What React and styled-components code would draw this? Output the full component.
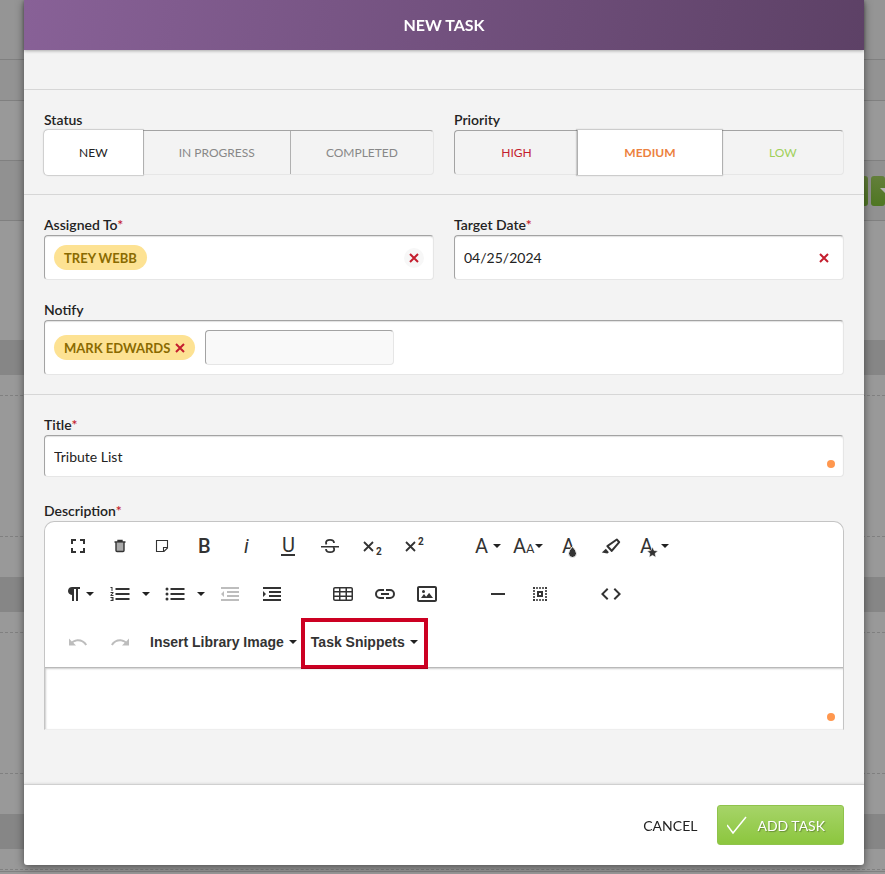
import React, { useState } from "react";
import styled, { createGlobalStyle, css } from "styled-components";

const GlobalStyle = createGlobalStyle`
  * {
    box-sizing: border-box;
  }

  body {
    margin: 0;
    overflow: hidden;
    background: #999999;
    color: #222222;
    font-family: Lato, "Liberation Sans", sans-serif;
    font-size: 14px;
  }

  button,
  input,
  textarea {
    font-family: inherit;
  }
`;

const LETTER = "Roboto, sans-serif";

const Icon = ({ children, faded }) => (
  <IconSvg viewBox="0 0 24 24" $faded={faded} aria-hidden="true">
    {children}
  </IconSvg>
);

const Letter = ({ x, y = 19, size = 20, weight = 400, children, ...rest }) => (
  <text x={x} y={y} fontFamily={LETTER} fontSize={size} fontWeight={weight} {...rest}>
    {children}
  </text>
);

const Cross = () => (
  <CrossSvg viewBox="0 0 10 10" aria-hidden="true">
    <path d="M1 1l8 8M9 1l-8 8" fill="none" stroke="#c41e2e" strokeWidth="2" />
  </CrossSvg>
);

const icons = {
  fullscreen: (
    <path d="M7 14H5v5h5v-2H7zM5 10h2V7h3V5H5zm12 7h-3v2h5v-5h-2zM14 5v2h3v3h2V5z" />
  ),
  trash: (
    <>
      <path d="M8 9h8v8.500h-8z" fill="#aaaaaa" />
      <path
        d="M8 8.500v8q0 1 1 1h6q1 0 1-1v-8M6.500 8h11M10 7.500V6.500h4v1"
        fill="none"
        stroke="#333333"
        strokeWidth="1.400"
      />
    </>
  ),
  note: (
    <path
      d="M6.500 6.500h11v7.500l-3.500 3.500h-7.500zM17.500 13.500h-4v4"
      fill="none"
      stroke="#333333"
      strokeWidth="1.100"
    />
  ),
  bold: (
    <Letter x="6" weight="500">
      B
    </Letter>
  ),
  italic: (
    <Letter x="10" fontStyle="italic">
      i
    </Letter>
  ),
  underline: (
    <>
      <Letter x="6" y="18">
        U
      </Letter>
      <path d="M5 20h14v2H5z" />
    </>
  ),
  strike: (
    <>
      <path
        d="M16 9c0-2-1.500-3.200-4-3.200S8 7 8 8.700q0 1 .6 1.700M8 15c0 2 1.700 3.200 4.200 3.200s4-1.100 4-2.900q0-1.300-1-2.200"
        fill="none"
        stroke="#333333"
        strokeWidth="1.800"
      />
      <path d="M3 12h18v1.500H3z" />
    </>
  ),
  subscript: (
    <>
      <path d="M4 8l9 9M13 8l-9 9" fill="none" stroke="#333333" strokeWidth="1.800" />
      <Letter x="16" y="21" size="10" weight="700">
        2
      </Letter>
    </>
  ),
  superscript: (
    <>
      <path d="M4 8l9 9M13 8l-9 9" fill="none" stroke="#333333" strokeWidth="1.800" />
      <Letter x="16" y="11" size="10" weight="700">
        2
      </Letter>
    </>
  ),
  fontFamily: <Letter x="6">A</Letter>,
  fontSize: (
    <>
      <Letter x="2">A</Letter>
      <Letter x="15" size="13">
        A
      </Letter>
    </>
  ),
  textColor: (
    <>
      <Letter x="5">A</Letter>
      <path
        d="M15.500 12.500q-4 4-4 7a4 4 0 0 0 8 0q0-3-4-7z"
        stroke="#ffffff"
        strokeWidth="1"
      />
    </>
  ),
  background: (
    <path d="M9.918 12.241l7.748-5.390 1.179 1.296-6.094 7.207-2.833-3.113M7.587 12.652l4.536 4.983a.934.934 0 0 0 1.395-.091l7.451-8.813a.908.908 0 0 0 .022-1.198l-2.513-2.761a.908.908 0 0 0-1.195-.092l-9.474 6.591a.934.934 0 0 0-.222 1.381zM2.794 18.528l5.617.972 1.479-1.346-3.029-3.328z" />
  ),
  inlineStyle: (
    <>
      <Letter x="3">A</Letter>
      <path
        d="M15.500 13l1.500 3.500 3.800.4-2.800 2.600.8 3.800-3.300-2-3.300 2 .8-3.800-2.800-2.600 3.800-.4z"
        stroke="#ffffff"
        strokeWidth=".5"
      />
    </>
  ),
  paragraph: <path d="M10.150 5a4.110 4.110 0 0 0-4.070 3.180A4 4 0 0 0 10 13v6h2V7h2v12h2V7h2V5z" />,
  orderedList: (
    <path d="M2.500 16h2v.5h-1v1h1v.5h-2v1h3v-4h-3zm1-7h1V5h-2v1h1zm-1 2h1.800l-1.800 2.100v.9h3v-1H3.700l1.800-2.100V10h-3zm5-5v2h14V6zm0 12h14v-2h-14zm0-5h14v-2h-14z" />
  ),
  unorderedList: (
    <>
      <circle cx="4" cy="7" r="1.500" />
      <circle cx="4" cy="12" r="1.500" />
      <circle cx="4" cy="17" r="1.500" />
      <path d="M7.500 6v2h14V6zm0 12h14v-2h-14zm0-5h14v-2h-14z" />
    </>
  ),
  outdent: <path d="M3 12l3 3V9zm0 7h18v-2H3zM3 7h18V5H3zm6 4h12V9H9zm0 4h12v-2H9z" />,
  indent: <path d="M3 9v6l3-3zm0 10h18v-2H3zM3 7h18V5H3zm6 4h12V9H9zm0 4h12v-2H9z" />,
  table: (
    <path d="M20 5H4c-1.100 0-2 .9-2 2v10c0 1.100.9 2 2 2h16c1.100 0 2-.9 2-2V7c0-1.100-.9-2-2-2zM9.500 13.500v-3h5v3h-5zm5 1.500v2.500h-5V15h5zm-5-6V6.500h5V9h-5zm-6-2c0-.3.2-.5.5-.5h4V9H3.500V7zm0 3.500H8v3H3.500v-3zm0 6.500v-2H8v2.500H4c-.3 0-.5-.2-.5-.5zm17 0c0 .3-.2.5-.5.5h-4V15h4.500v2zm0-3.500H16v-3h4.500v3zM16 9V6.500h4c.3 0 .5.2.5.5v2H16z" />
  ),
  link: (
    <path d="M11 17H7A5 5 0 0 1 7 7h4v2H7a3 3 0 0 0 0 6h4zm6-10h-4v2h4a3 3 0 0 1 0 6h-4v2h4a5 5 0 0 0 0-10zm-1 4H8v2h8z" />
  ),
  image: (
    <path d="M14.200 11l3.800 5H6l3-3.900 2.100 2.700L14 11h.2zM8.500 11a1.500 1.500 0 1 0 0-3 1.500 1.500 0 0 0 0 3zM22 6v12c0 1.100-.9 2-2 2H4c-1.100 0-2-.9-2-2V6c0-1.100.9-2 2-2h16c1.100 0 2 .9 2 2zm-2 0H4v12h16V6z" />
  ),
  line: <path d="M5 11h14v2H5z" />,
  selectAll: (
    <>
      <path
        d="M5 6h14M5 18h14M6 5v14M18 5v14"
        fill="none"
        stroke="#333333"
        strokeWidth="1.600"
        strokeDasharray="2 1"
      />
      <path d="M10 10h4v4h-4z" fill="none" stroke="#333333" strokeWidth="2" />
    </>
  ),
  code: (
    <path d="M9.400 16.600L4.800 12l4.600-4.600L8 6l-6 6 6 6zm5.200 0l4.600-4.600-4.600-4.600L16 6l6 6-6 6z" />
  ),
  undo: (
    <path d="M10.400 9.400c-1.700.3-3.200.9-4.600 2L3 8.500v7h7l-2.700-2.700c3.700-2.600 8.800-1.800 11.500 1.900.2.300.4.500.5.800l1.800-.9C18.900 10.800 14.700 8.700 10.400 9.400z" />
  ),
  redo: (
    <path d="M13.600 9.400c1.700.3 3.200.9 4.600 2L21 8.500v7h-7l2.700-2.700C13 10.200 7.900 11 5.300 14.700c-.2.300-.4.500-.5.800L3 14.600C5.100 10.800 9.300 8.700 13.600 9.400z" />
  ),
};

// kind: "menu" has its caret inside, "split" has it as a second button
const toolbarRows = [
  [
    [
      { icon: "fullscreen", label: "Fullscreen" },
      { icon: "trash", label: "Clear" },
      { icon: "note", label: "Note" },
      { icon: "bold", label: "Bold" },
      { icon: "italic", label: "Italic" },
      { icon: "underline", label: "Underline" },
      { icon: "strike", label: "Strikethrough" },
      { icon: "subscript", label: "Subscript" },
      { icon: "superscript", label: "Superscript" },
    ],
    [
      { icon: "fontFamily", label: "Font Family", kind: "menu" },
      { icon: "fontSize", label: "Font Size", kind: "menu" },
      { icon: "textColor", label: "Text Color" },
      { icon: "background", label: "Background Color" },
      { icon: "inlineStyle", label: "Inline Style", kind: "menu" },
    ],
  ],
  [
    [
      { icon: "paragraph", label: "Paragraph Format", kind: "menu" },
      { icon: "orderedList", label: "Ordered List", kind: "split" },
      { icon: "unorderedList", label: "Unordered List", kind: "split" },
      { icon: "outdent", label: "Decrease Indent", faded: true },
      { icon: "indent", label: "Increase Indent" },
    ],
    [
      { icon: "table", label: "Insert Table" },
      { icon: "link", label: "Insert Link" },
      { icon: "image", label: "Insert Image" },
    ],
    [
      { icon: "line", label: "Insert Horizontal Line" },
      { icon: "selectAll", label: "Select All" },
    ],
    [{ icon: "code", label: "Code View" }],
  ],
];

const Tool = ({ icon, label, kind, faded }) => {
  const button = (
    <ToolButton type="button" aria-label={label} disabled={faded}>
      <Icon faded={faded}>{icons[icon]}</Icon>
      {kind === "menu" && <Caret />}
    </ToolButton>
  );

  if (kind !== "split") return button;

  return (
    <SplitTool>
      {button}
      <SplitButton type="button" aria-label={`${label} options`}>
        <Caret />
      </SplitButton>
    </SplitTool>
  );
};

const Choice = ({ name, options, value, onChange }) => (
  <Segments role="radiogroup" aria-label={name}>
    {options.map((option) => (
      <Segment
        key={option.label}
        $active={value === option.label}
        $color={option.color}
        $strong={option.strong}
      >
        <HiddenRadio
          type="radio"
          name={name}
          checked={value === option.label}
          onChange={() => onChange(option.label)}
        />
        {option.label}
      </Segment>
    ))}
  </Segments>
);

const statuses = [
  { label: "NEW", color: "#222222" },
  { label: "IN PROGRESS", color: "#888888" },
  { label: "COMPLETED", color: "#888888" },
];

const priorities = [
  { label: "HIGH", color: "#c41e2e" },
  { label: "MEDIUM", color: "#ec8140", strong: true },
  { label: "LOW", color: "#9fd05a" },
];

const App = () => {
  const [status, setStatus] = useState("NEW");
  const [priority, setPriority] = useState("MEDIUM");
  const [date, setDate] = useState("04/25/2024");
  const [title, setTitle] = useState("Tribute List");

  return (
    <>
      <GlobalStyle />
      <Backdrop aria-hidden="true">
        <Band $height={60} $color="#959595" $line="solid" />
        <Band $height={41} $color="#939393" $line="solid" />
        <Band $height={60} $color="#999999" $line="solid" />
        <Band $height={60} $color="#919191" $line="solid">
          <BackButton $width={40} />
          <BackButton $width={14}>
            <BackCaret />
          </BackButton>
        </Band>
        <Band $height={119} />
        <Band $height={35} $color="#868686" />
        <Band $height={21} $line="dashed" />
        <Band $height={141} $line="dashed" />
        <Band $height={40} />
        <Band $height={35} $color="#868686" />
        <Band $height={21} $line="dashed" />
        <Band $height={141} $line="dashed" />
        <Band $height={40} />
        <Band $height={35} $color="#868686" />
        <Band $height={21} $line="dashed" />
        <Band $height={2} $line="solid" />
      </Backdrop>

      <Overlay>
        <Modal role="dialog" aria-labelledby="modal-title">
          <Header>
            <Heading id="modal-title">NEW TASK</Heading>
          </Header>

          <Body>
            <Spacer />
            <Section>
              <Columns>
                <Field>
                  <Label as="div">Status</Label>
                  <Choice
                    name="Status"
                    options={statuses}
                    value={status}
                    onChange={setStatus}
                  />
                </Field>
                <Field>
                  <Label as="div">Priority</Label>
                  <Choice
                    name="Priority"
                    options={priorities}
                    value={priority}
                    onChange={setPriority}
                  />
                </Field>
              </Columns>
            </Section>

            <Section>
              <Columns>
                <Field>
                  <Label as="div">
                    Assigned To<Required>*</Required>
                  </Label>
                  <Box>
                    <Tag>TREY WEBB</Tag>
                    <ClearButton type="button" aria-label="Clear assignee" $shaded>
                      <Cross />
                    </ClearButton>
                  </Box>
                </Field>
                <Field>
                  <Label htmlFor="target-date">
                    Target Date<Required>*</Required>
                  </Label>
                  <Box>
                    <TextInput
                      id="target-date"
                      value={date}
                      onChange={(ev) => setDate(ev.target.value)}
                    />
                    <ClearButton
                      type="button"
                      aria-label="Clear date"
                      onClick={() => setDate("")}
                    >
                      <Cross />
                    </ClearButton>
                  </Box>
                </Field>
              </Columns>
              <Field>
                <Label htmlFor="notify">Notify</Label>
                <Box $tall>
                  <Tag>
                    MARK EDWARDS
                    <TagButton type="button" aria-label="Remove Mark Edwards">
                      <Cross />
                    </TagButton>
                  </Tag>
                  <NotifyInput id="notify" />
                </Box>
              </Field>
            </Section>

            <Section $last>
              <Field>
                <Label htmlFor="title">
                  Title<Required>*</Required>
                </Label>
                <Box $short>
                  <TextInput
                    id="title"
                    value={title}
                    onChange={(ev) => setTitle(ev.target.value)}
                  />
                  <Dot />
                </Box>
              </Field>
              <Field>
                <Label htmlFor="description">
                  Description<Required>*</Required>
                </Label>
                <Editor>
                  <Toolbar>
                    {toolbarRows.map((groups, row) => (
                      <ToolRow key={row}>
                        {groups.map((tools, group) => (
                          <ToolGroup key={group}>
                            {tools.map((tool) => (
                              <Tool key={tool.icon} {...tool} />
                            ))}
                          </ToolGroup>
                        ))}
                      </ToolRow>
                    ))}
                    <ToolRow>
                      <ToolGroup>
                        <Tool icon="undo" label="Undo" faded />
                        <Tool icon="redo" label="Redo" faded />
                        <TextTool type="button">
                          Insert Library Image
                          <Caret />
                        </TextTool>
                        <TextTool type="button" $marked>
                          Task Snippets
                          <Caret />
                        </TextTool>
                      </ToolGroup>
                    </ToolRow>
                  </Toolbar>
                  <EditArea>
                    <Description id="description" />
                    <Dot />
                  </EditArea>
                </Editor>
              </Field>
            </Section>
          </Body>

          <Footer>
            <CancelButton type="button">CANCEL</CancelButton>
            <AddButton type="button">
              <CheckSvg viewBox="0 0 20 20" aria-hidden="true">
                <path d="M0 10l6 8L19 2" fill="none" stroke="#ffffff" strokeWidth="1.500" />
              </CheckSvg>
              ADD TASK
            </AddButton>
          </Footer>
        </Modal>
      </Overlay>
    </>
  );
};

const Backdrop = styled.div`
  display: flex;
  flex-direction: column;
`;

const Band = styled.div`
  display: flex;
  align-items: center;
  justify-content: flex-end;
  gap: 3px;
  height: ${(props) => props.$height}px;
  background: ${(props) => props.$color || "#999999"};
  border-bottom: ${(props) => (props.$line ? `1px ${props.$line} #808080` : "none")};
`;

const BackButton = styled.div`
  display: flex;
  align-items: center;
  justify-content: flex-end;
  width: ${(props) => props.$width}px;
  height: 30px;
  border-radius: 3px;
  background: linear-gradient(#637f3b, #4f7722);
`;

const BackCaret = styled.span`
  border: 5px solid transparent;
  border-top-color: #b5b5b5;
  border-right: none;
  border-bottom: none;
`;

const Overlay = styled.div`
  position: fixed;
  inset: 0;
  padding: 0 21px 0 24px;
`;

const Modal = styled.div`
  background: #ffffff;
  border-radius: 0 0 3px 3px;
  box-shadow: 0 2px 8px rgba(0, 0, 0, 0.5);
`;

const Header = styled.header`
  position: relative;
  display: flex;
  align-items: center;
  justify-content: center;
  height: 50px;
  padding-bottom: 2px;
  background: linear-gradient(100deg, #886197, #5d4166);
  box-shadow: 0 1px 3px rgba(0, 0, 0, 0.3);
`;

const Heading = styled.h1`
  margin: 0;
  color: #ffffff;
  font-size: 16px;
  font-weight: 700;
`;

const Body = styled.div`
  background: #f3f3f3;
`;

const Spacer = styled.div`
  height: 40px;
  border-bottom: 1px solid #d6d6d6;
`;

const Section = styled.section`
  display: flex;
  flex-direction: column;
  gap: ${(props) => (props.$last ? 24 : 20)}px;
  padding: ${(props) => (props.$last ? "20px 20px 54px" : "20px 20px 19px")};
  border-bottom: ${(props) => (props.$last ? "none" : "1px solid #d6d6d6")};
`;

const Columns = styled.div`
  display: grid;
  grid-template-columns: 1fr 1fr;
  gap: 20px;
`;

const Field = styled.div`
  display: flex;
  flex-direction: column;
  min-width: 0;
`;

const Label = styled.label`
  font-size: 14px;
  font-weight: 600;
  line-height: 20px;
`;

const Required = styled.span`
  color: #c41e2e;
`;

const inset = css`
  border: 1px solid #e6e6e6;
  border-top-color: #a3a3a3;
  border-left-color: #a3a3a3;
  border-radius: 4px;
`;

const Segments = styled.div`
  ${inset}
  display: flex;
  height: 45px;
`;

const Segment = styled.label`
  flex: 1 1 auto;
  display: flex;
  align-items: center;
  justify-content: center;
  color: ${(props) => props.$color};
  font-size: 12px;
  font-weight: ${(props) => (props.$strong ? 700 : 400)};
  cursor: pointer;

  & + & {
    border-left: 1px solid #b0b0b0;
  }

  ${(props) =>
    props.$active &&
    css`
      && {
        margin: -1px 0 -1px -1px;
        border-left: none;
        background: #ffffff;
        box-shadow: 0 0 1px 1px rgba(0, 0, 0, 0.16);
      }

      &:first-child {
        border-radius: 4px 0 0 4px;
      }
    `}
`;

const HiddenRadio = styled.input`
  position: absolute;
  opacity: 0;
`;

const Box = styled.div`
  ${inset}
  position: relative;
  display: flex;
  align-items: center;
  gap: 10px;
  height: ${(props) => (props.$tall ? 55 : props.$short ? 42 : 45)}px;
  padding: 0 9px;
  background: #ffffff;
  box-shadow: inset 0 1px 1px rgba(0, 0, 0, 0.12);
`;

const Tag = styled.span`
  display: flex;
  align-items: center;
  gap: 5px;
  height: 25px;
  padding: 0 10px;
  border-radius: 13px;
  background: #fde293;
  color: #8a6a00;
  font-size: 13px;
  font-weight: 700;
`;

const TagButton = styled.button`
  display: flex;
  padding: 0;
  border: none;
  background: none;
`;

const CrossSvg = styled.svg`
  width: 10px;
  height: 10px;
`;

const ClearButton = styled.button`
  display: flex;
  align-items: center;
  justify-content: center;
  width: 20px;
  height: 20px;
  margin-left: auto;
  padding: 0;
  border: none;
  border-radius: 50%;
  background: ${(props) => (props.$shaded ? "#f7f7f7" : "none")};
`;

const TextInput = styled.input`
  flex: 1;
  min-width: 0;
  padding: 0;
  border: none;
  outline: none;
  background: none;
  color: #222222;
  font-size: 14px;
`;

const NotifyInput = styled.input`
  ${inset}
  width: 189px;
  height: 35px;
  background: #f9f9f9;
`;

const Dot = styled.span`
  position: absolute;
  right: 8px;
  bottom: 8px;
  width: 8px;
  height: 8px;
  border-radius: 50%;
  background: #ff974e;
`;

const Editor = styled.div`
  border: 1px solid #c4c4c4;
  border-bottom-color: #eeeeee;
  border-radius: 10px 10px 0 0;
  background: #ffffff;
`;

const Toolbar = styled.div`
  display: flex;
  flex-direction: column;
  gap: 8px;
  padding: 4px 14px 5px;
  border-bottom: 1px solid #b9b9b9;
`;

const ToolRow = styled.div`
  display: flex;
  gap: 33px;
`;

const ToolGroup = styled.div`
  display: flex;
  gap: 4px;
`;

const ToolButton = styled.button`
  display: flex;
  align-items: center;
  justify-content: center;
  width: 38px;
  height: 40px;
  padding: 0;
  border: none;
  background: none;
`;

const SplitTool = styled.div`
  display: flex;
`;

const SplitButton = styled(ToolButton)`
  width: 13px;
`;

const IconSvg = styled.svg`
  flex: none;
  width: 24px;
  height: 24px;
  fill: ${(props) => (props.$faded ? "#bdbdbd" : "#333333")};
`;

const Caret = styled.span`
  border: 4px solid transparent;
  border-top-color: #222222;
  border-bottom: none;
`;

const TextTool = styled.button`
  position: relative;
  display: flex;
  align-items: center;
  gap: 5px;
  height: 40px;
  padding: 0 3px 0 7px;
  border: none;
  background: none;
  color: #333333;
  font-family: "Liberation Sans", Arial, sans-serif;
  font-size: 14px;
  font-weight: 700;

  ${(props) =>
    props.$marked &&
    css`
      &::after {
        content: "";
        position: absolute;
        inset: -4px -7px -7px -3px;
        border: 4px solid #cc0022;
      }
    `}
`;

const EditArea = styled.div`
  position: relative;
  height: 61px;
  box-shadow: inset 1px 1px 2px rgba(0, 0, 0, 0.2);
`;

const Description = styled.textarea`
  display: block;
  width: 100%;
  height: 100%;
  padding: 10px;
  border: none;
  outline: none;
  resize: none;
  background: none;
`;

const Footer = styled.footer`
  display: flex;
  align-items: center;
  justify-content: flex-end;
  gap: 20px;
  height: 81px;
  padding: 0 20px;
  border-top: 1px solid #d0d0d0;
  box-shadow: 0 -1px 2px rgba(0, 0, 0, 0.08);
`;

const CancelButton = styled.button`
  padding: 0;
  border: none;
  background: none;
  color: #222222;
  font-size: 14px;
`;

const AddButton = styled.button`
  display: flex;
  align-items: center;
  gap: 10px;
  height: 40px;
  padding: 0 18px 0 9px;
  border: 1px solid #8fc34b;
  border-radius: 3px;
  background: linear-gradient(#a6d468, #8cc63e);
  color: #ffffff;
  font-size: 14px;
  text-shadow: 1px 1px 1px rgba(0, 0, 0, 0.3);
`;

const CheckSvg = styled.svg`
  width: 20px;
  height: 20px;
`;

export default App;
